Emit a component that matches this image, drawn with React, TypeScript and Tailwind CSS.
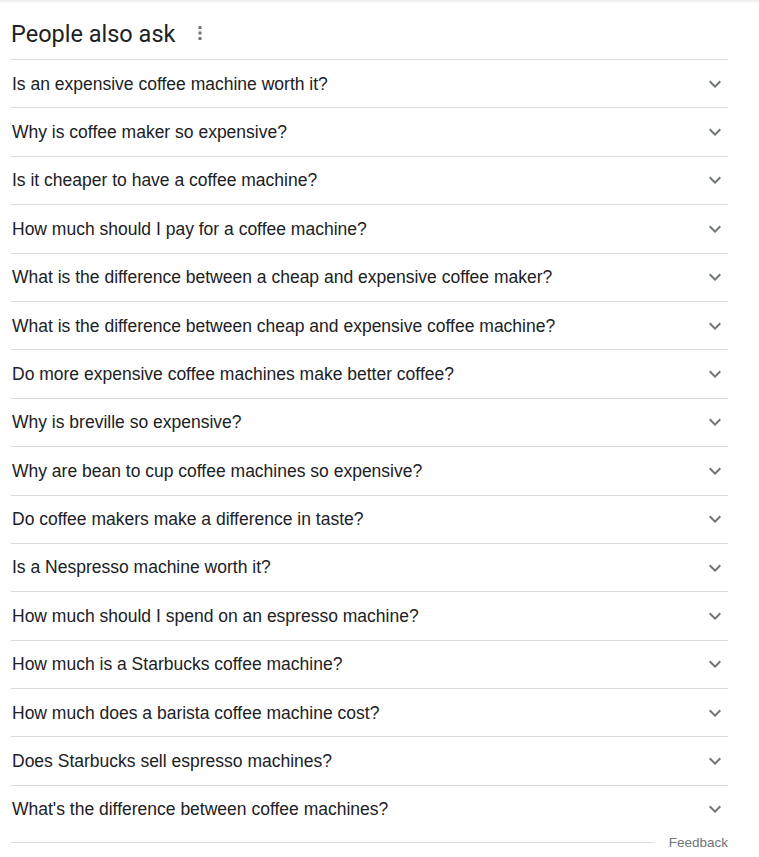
import React from "react";

const questions = [
  "Is an expensive coffee machine worth it?",
  "Why is coffee maker so expensive?",
  "Is it cheaper to have a coffee machine?",
  "How much should I pay for a coffee machine?",
  "What is the difference between a cheap and expensive coffee maker?",
  "What is the difference between cheap and expensive coffee machine?",
  "Do more expensive coffee machines make better coffee?",
  "Why is breville so expensive?",
  "Why are bean to cup coffee machines so expensive?",
  "Do coffee makers make a difference in taste?",
  "Is a Nespresso machine worth it?",
  "How much should I spend on an espresso machine?",
  "How much is a Starbucks coffee machine?",
  "How much does a barista coffee machine cost?",
  "Does Starbucks sell espresso machines?",
  "What's the difference between coffee machines?",
];

function Chevron() {
  return (
    <svg width="24" height="24" viewBox="0 0 24 24" className="shrink-0">
      <path d="M16.59 8.59 12 13.17 7.41 8.59 6 10l6 6 6-6z" fill="#70757a" />
    </svg>
  );
}

export default function App() {
  return (
    <div className="w-[759px] h-[857px] bg-white overflow-hidden" style={{ fontFamily: "'Liberation Sans', Arial, sans-serif" }}>
      <div className="h-[4px] bg-gradient-to-b from-[#ececec] to-white" />
      <div className="w-[717px] ml-[11px]">
        <div className="h-[55px] flex items-center pt-[6px]">
          <span className="text-[23.5px] text-[#202124] leading-none" style={{ fontFamily: "Roboto, 'Open Sans', sans-serif" }}>People also ask</span>
          <svg width="4" height="14" viewBox="0 0 4 14" className="ml-[23px] mt-[-4px]">
            <rect x="0.5" y="0" width="3" height="3" fill="#70757a" />
            <rect x="0.5" y="5.5" width="3" height="3" fill="#70757a" />
            <rect x="0.5" y="11" width="3" height="3" fill="#70757a" />
          </svg>
        </div>
        {questions.map((q, i) => (
          <div key={i} className={`flex items-center justify-between border-t border-[#dadce0] ${i === questions.length - 1 ? "h-[48px]" : "h-[48.4px]"}`}>
            <span className="text-[17.5px] text-[#202124] pl-[1px]">{q}</span>
            <div className="mr-[1px] flex items-center"><Chevron /></div>
          </div>
        ))}
        <div className="flex items-center mt-[1px]">
          <div className="flex-1 border-t border-[#dadce0]" />
          <span className="ml-[15px] text-[13.5px] text-[#70757a] leading-[18px]">Feedback</span>
        </div>
      </div>
    </div>
  );
}
